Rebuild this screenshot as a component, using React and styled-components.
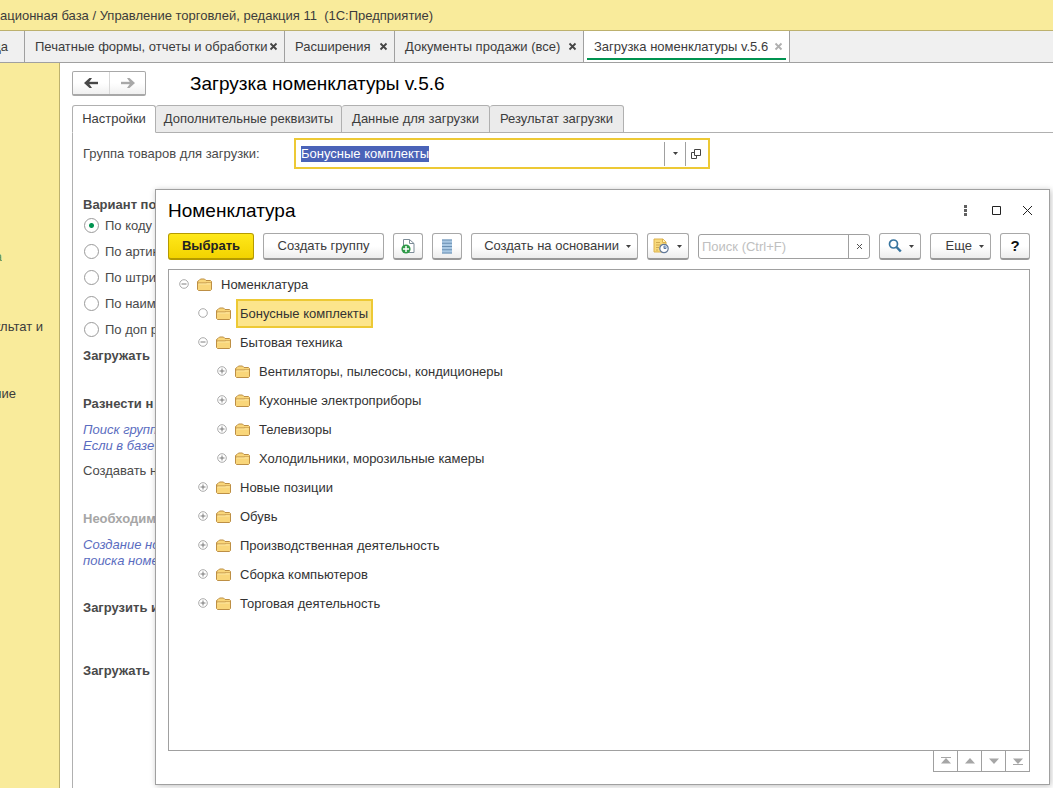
import React, { useEffect, useRef } from 'react'
import styled, { createGlobalStyle, css } from 'styled-components'

const GlobalStyle = createGlobalStyle`
  * { box-sizing: border-box; }
  body {
    margin: 0;
    background: #fff;
    color: #3c3c3c;
    font-family: "Liberation Sans", Arial, sans-serif;
    font-size: 13px;
    line-height: 16px;
  }
  button, input {
    font: inherit;
    color: inherit;
  }
  button { padding: 0; cursor: pointer; }
`
const Page = styled.div`
  display: flex;
  flex-direction: column;
  height: 100vh;
  overflow: hidden;
`
const TitleBar = styled.header`
  height: 31px;
  padding-top: 8px;
  background: #f9eb9b;
  border-bottom: 1px solid #bdb16e;
  white-space: pre;
`
const WindowTabs = styled.nav`
  display: flex;
  height: 32px;
  background: #f0f0f0;
  border-bottom: 1px solid #a0a0a0;
`
const WindowTab = styled.div`
  flex: none;
  display: flex;
  align-items: center;
  justify-content: space-between;
  width: ${props => props.$width}px;
  padding: 0 6px 0 10px;
  border-right: 1px solid #a0a0a0;
  white-space: nowrap;
  ${props => props.$cut && css`
    padding: 0 16px 0 0;
    justify-content: flex-end;
    overflow: hidden;
  `}
  ${props => props.$active && css`
    background: linear-gradient(#009350, #009350) center bottom 2px / calc(100% - 6px) 2px no-repeat #fff;
  `}
`
const TabLink = styled.a`
  color: #3c3c3c;
  text-decoration: none;
`
const CloseTab = styled.button`
  display: flex;
  border: none;
  background: none;
  color: ${props => props.$pale ? '#b0b0b0' : '#444'};
`
const Body = styled.div`
  display: flex;
  flex: 1;
  min-height: 0;
`
const Sidebar = styled.aside`
  flex: none;
  display: flex;
  flex-direction: column;
  width: 60px;
  padding-top: 186px;
  background: #f9eb9b;
  border-right: 1px solid #bdb16e;
`
const SideItem = styled.a`
  display: flex;
  justify-content: flex-end;
  overflow: hidden;
  width: ${props => props.$width}px;
  margin-bottom: ${props => props.$gap || 0}px;
  color: ${props => props.$green ? '#5f8f4c' : '#3c3c3c'};
  text-decoration: none;
  white-space: nowrap;
`
const Main = styled.main`
  flex: 1;
  display: flex;
  flex-direction: column;
  min-width: 0;
  padding: 8px 0 0 12px;
`
const Heading = styled.div`
  display: flex;
  align-items: center;
  gap: 44px;
`
const NavButtons = styled.div`
  display: flex;
  height: 25px;
  border: 1px solid #a8a8a8;
  border-bottom-width: 2px;
  border-radius: 2px;
  background: linear-gradient(#fff 50%, #f0f0f0);
`
const NavButton = styled.button`
  display: flex;
  align-items: center;
  justify-content: center;
  width: 36px;
  border: none;
  background: none;
  color: ${props => props.$pale ? '#a8a8a8' : '#484848'};
  & + & {
    border-left: 1px solid #d8d8d8;
  }
`
const Title = styled.h1`
  margin: 0;
  color: #000;
  font-size: 19px;
  font-weight: normal;
  line-height: 24px;
`
const FormTabs = styled.div`
  display: flex;
  margin-top: 9px;
  border-bottom: 1px solid #b0b0b0;
`
const FormTab = styled.button`
  flex: none;
  width: ${props => props.$width}px;
  height: 28px;
  margin-bottom: -1px;
  border: 1px solid #b0b0b0;
  border-left-width: ${props => props.$active ? 1 : 0}px;
  border-radius: 3px 3px 0 0;
  background: #ebebeb;
  white-space: nowrap;
  ${props => props.$active && css`
    background: #fff;
    border-bottom-color: #fff;
  `}
`
const Form = styled.form`
  flex: 1;
  display: flex;
  flex-direction: column;
  padding: 5px 0 0 10px;
  border-left: 1px solid #b0b0b0;
  color: #4a4a4a;
  white-space: nowrap;
`
const FieldRow = styled.div`
  display: flex;
  align-items: center;
  margin-bottom: 28px;
`
const Label = styled.label`
  width: 211px;
`
const ComboBox = styled.div`
  display: flex;
  align-items: center;
  width: 416px;
  height: 31px;
  padding: 0 2px 0 5px;
  border: 2px solid #edc935;
  background: #fff;
`
const ComboInput = styled.input`
  flex: 1;
  min-width: 0;
  height: 16px;
  padding: 0;
  border: none;
  outline: none;
  &::selection {
    background: #4a63b8;
    color: #fff;
  }
`
const ComboButton = styled.button`
  display: flex;
  align-items: center;
  justify-content: center;
  width: 21px;
  height: 24px;
  border: none;
  border-left: 1px solid #a0a0a0;
  background: none;
`
const Section = styled.h2`
  margin: 0 0 ${props => props.$gap || 0}px;
  color: ${props => props.$pale ? '#a6a6a6' : '#4a4a4a'};
  font-size: 13px;
  line-height: 16px;
`
const RadioGroup = styled.div`
  display: flex;
  flex-direction: column;
  margin-bottom: 5px;
`
const RadioRow = styled.label`
  display: flex;
  align-items: center;
  gap: 6px;
  height: 26px;
`
const Radio = styled.input`
  appearance: none;
  width: 15px;
  height: 15px;
  margin: 0 0 1px 1px;
  border: 1px solid #9a9a9a;
  border-radius: 50%;
  background: #fff;
  &:checked {
    background: radial-gradient(circle, #009350 2px, #fff 3px);
  }
`
const Hint = styled.p`
  margin: 0 0 ${props => props.$gap}px;
  color: #5a6cc0;
  font-style: italic;
`
const Note = styled.p`
  margin: 0 0 32px;
`

// modal window floating over the form
const Dialog = styled.section`
  position: absolute;
  top: 189px;
  right: 3px;
  bottom: 3px;
  left: 155px;
  display: flex;
  flex-direction: column;
  padding: 9px 19px 12px 12px;
  border: 1px solid #a0a0a0;
  background: #fff;
  box-shadow: 1px 1px 6px rgba(0, 0, 0, 0.25);
`
const DialogHeader = styled.div`
  display: flex;
  align-items: center;
  justify-content: space-between;
  margin-bottom: 10px;
`
const WindowButtons = styled.div`
  display: flex;
  gap: 15px;
  margin-right: -7px;
`
const WindowButton = styled.button`
  display: flex;
  border: none;
  background: none;
  color: #333;
`
const Toolbar = styled.div`
  display: flex;
  gap: 9px;
  margin-bottom: 9px;
`
const Button = styled.button`
  flex: none;
  display: flex;
  align-items: center;
  justify-content: center;
  gap: 7px;
  width: ${props => props.$width || 30}px;
  height: 27px;
  border: 1px solid #a8a8a8;
  border-bottom: 2px solid #989898;
  border-radius: 3px;
  background: linear-gradient(#fff 50%, #ededed);
  white-space: nowrap;
  ${props => props.$menu && css`
    justify-content: flex-end;
    padding-right: 6px;
  `}
  ${props => props.$primary && css`
    border-color: #b59a00;
    background: linear-gradient(#ffe81a, #f3d300);
    color: #222;
    font-weight: bold;
  `}
  ${props => props.$help && css`
    color: #111;
    font-size: 15px;
    font-weight: bold;
  `}
`
const Search = styled.div`
  flex: 1;
  display: flex;
  min-width: 0;
  height: 25px;
  margin-top: 1px;
  border: 1px solid #a0a0a0;
  border-radius: 3px;
`
const SearchInput = styled.input`
  flex: 1;
  min-width: 0;
  padding: 0 3px;
  border: none;
  outline: none;
  background: none;
  &::placeholder {
    color: #c0c0c0;
  }
`
const ClearButton = styled.button`
  display: flex;
  align-items: center;
  justify-content: center;
  width: 21px;
  border: none;
  border-left: 1px solid #a0a0a0;
  background: none;
`
const Tree = styled.ul`
  flex: 1;
  min-height: 0;
  margin: 0;
  padding: 0;
  overflow: hidden;
  border: 1px solid #a0a0a0;
  list-style: none;
`
const TreeRow = styled.li`
  display: flex;
  align-items: center;
  height: 29px;
  padding-left: ${props => 10 + props.$level * 19}px;
`
const Toggle = styled.button`
  display: flex;
  margin: 0 8px 2px 0;
  border: none;
  background: none;
`
const RowText = styled.span`
  margin-left: 5px;
  padding: 5px 3px 4px 2px;
  border: 2px solid transparent;
  color: #333;
  white-space: nowrap;
  ${props => props.$selected && css`
    border-color: #edc935;
    background: #fce58c;
  `}
`
const ScrollButtons = styled.div`
  display: flex;
  align-self: flex-end;
  border: 1px solid #a0a0a0;
  border-top: none;
`
const ScrollButton = styled.button`
  display: flex;
  align-items: center;
  justify-content: center;
  width: 24px;
  height: 20px;
  border: none;
  background: none;
  & + & {
    border-left: 1px solid #a0a0a0;
  }
  &:first-child {
    width: 23px;
  }
`

const Cross = () => (
  <svg width="9" height="9" viewBox="0 0 9 9">
    <path d="M1.5 1.5l6 6M7.5 1.5l-6 6" stroke="currentColor" strokeWidth="1.8" />
  </svg>
)

const Arrow = ({ flip }) => (
  <svg width="16" height="12" viewBox="0 0 16 12">
    <g transform={flip ? 'translate(16 0) scale(-1 1)' : undefined}>
      <path d="M15 6H3" stroke="currentColor" strokeWidth="2.4" />
      <path d="M1 6l5.500-5h2.500L5.500 6 9 11H6.500z" fill="currentColor" />
    </g>
  </svg>
)

const Caret = () => (
  <svg width="5" height="3" viewBox="0 0 5 3">
    <path d="M0 0h5L2.500 3z" fill="#404040" />
  </svg>
)

const OpenIcon = () => (
  <svg width="10" height="10" viewBox="0 0 10 10" fill="none" stroke="#444">
    <path d="M3.500.5h6v6h-6zM3.500 3.500h-3v6h5v-3" />
  </svg>
)

const Folder = () => (
  <svg width="15" height="13" viewBox="0 0 15 13">
    <path d="M.5 11.500V3.500L2 2.500 3.500 1h4L9 2.500h4.500l1 1v8l-1 1h-12z" fill="#f9d67a" stroke="#bd8f45" />
    <path d="M1 5h8.500l1-1" fill="none" stroke="#bd8f45" />
    <path d="M10 4.500h4" stroke="#d7ad5c" />
    <path d="M1.500 6h12" stroke="#fde6a0" />
  </svg>
)

const ToggleIcon = ({ type }) => (
  <svg width="10" height="10" viewBox="0 0 10 10" fill="none">
    <circle cx="5" cy="5" r="4.300" stroke="#a0a0a0" strokeWidth=".9" />
    {type !== 'leaf' && <path d="M2.500 5h5" stroke="#707070" strokeWidth=".9" />}
    {type === 'closed' && <path d="M5 2.500v5" stroke="#707070" strokeWidth=".9" />}
  </svg>
)

const NewDocument = () => (
  <svg width="14" height="16" viewBox="0 0 14 16">
    <path d="M2.500 10V1.500h6l4.500 4v9H8" fill="#fff" stroke="#7c8c98" />
    <path d="M8.500 1.500v4H13" fill="none" stroke="#7c8c98" />
    <circle cx="5" cy="11" r="4.600" fill="#2f9a48" />
    <path d="M5 8v6M2 11h6" stroke="#fff" strokeWidth="1.500" />
  </svg>
)

const ListIcon = () => (
  <svg width="12" height="15" viewBox="0 0 12 15">
    <path d="M1 .5h10v14H1z" fill="#a9c8e3" />
    <path d="M1 1h10M1 4.250h10M1 7.500h10M1 10.750h10M1 14h10" stroke="#6a8fb2" />
  </svg>
)

const HistoryIcon = () => (
  <svg width="17" height="16" viewBox="0 0 17 16">
    <path d="M1 1h9l3 3v10H1z" fill="#f8da7c" stroke="#dcb24e" />
    <path d="M9.500 1v3.500H13" fill="#fff2c0" stroke="#dcb24e" />
    <path d="M3 4.500h4M3 7h5M3 9.500h3M3 12h2" stroke="#d0aa50" />
    <circle cx="11" cy="10.500" r="4.200" fill="#fff" stroke="#62799a" strokeWidth="1.200" />
    <path d="M11 10.500V7.300a3.200 3.200 0 0 1 3 3.200z" fill="#9db9dc" />
    <path d="M11 7.800v2.700h2" fill="none" stroke="#62799a" />
  </svg>
)

const SearchIcon = () => (
  <svg width="14" height="14" viewBox="0 0 14 14" fill="none" stroke="#37749f">
    <circle cx="5.500" cy="5" r="4" strokeWidth="1.700" />
    <path d="M8.500 8l4.300 4.500" strokeWidth="2.500" />
  </svg>
)

const ScrollIcon = ({ down, edge }) => (
  <svg width="10" height="8" viewBox="0 0 10 8" fill="#a6a6a6">
    <g transform={down ? 'translate(0 8) scale(1 -1)' : undefined}>
      <path d="M5 1l5 5.500H0z" />
      {edge && <path d="M0 0h10v1H0z" />}
    </g>
  </svg>
)

const windowTabs = [
  { text: 'Печатные формы, отчеты и обработки', width: 260 },
  { text: 'Расширения', width: 110 },
  { text: 'Документы продажи (все)', width: 189 },
  { text: 'Загрузка номенклатуры v.5.6', width: 206, active: true },
]

const formTabs = [
  { text: 'Настройки', width: 84, active: true },
  { text: 'Дополнительные реквизиты', width: 186 },
  { text: 'Данные для загрузки', width: 148 },
  { text: 'Результат загрузки', width: 134 },
]

const searchModes = ['По коду', 'По артик', 'По штри', 'По наим', 'По доп р']

const groups = [
  { text: 'Номенклатура', level: 0, type: 'open' },
  { text: 'Бонусные комплекты', level: 1, type: 'leaf', selected: true },
  { text: 'Бытовая техника', level: 1, type: 'open' },
  { text: 'Вентиляторы, пылесосы, кондиционеры', level: 2, type: 'closed' },
  { text: 'Кухонные электроприборы', level: 2, type: 'closed' },
  { text: 'Телевизоры', level: 2, type: 'closed' },
  { text: 'Холодильники, морозильные камеры', level: 2, type: 'closed' },
  { text: 'Новые позиции', level: 1, type: 'closed' },
  { text: 'Обувь', level: 1, type: 'closed' },
  { text: 'Производственная деятельность', level: 1, type: 'closed' },
  { text: 'Сборка компьютеров', level: 1, type: 'closed' },
  { text: 'Торговая деятельность', level: 1, type: 'closed' },
]

const SettingsForm = () => {
  const groupInput = useRef(null)

  useEffect(() => {
    groupInput.current.focus()
    groupInput.current.select()
  }, [])

  return (
    <Form>
      <FieldRow>
        <Label htmlFor="group">Группа товаров для загрузки:</Label>
        <ComboBox>
          <ComboInput id="group" ref={groupInput} defaultValue="Бонусные комплекты" />
          <ComboButton type="button" aria-label="Выбрать из списка"><Caret /></ComboButton>
          <ComboButton type="button" aria-label="Открыть"><OpenIcon /></ComboButton>
        </ComboBox>
      </FieldRow>

      <Section>Вариант по</Section>
      <RadioGroup>
        {searchModes.map((mode, i) => (
          <RadioRow key={mode}>
            <Radio type="radio" name="mode" defaultChecked={i === 0} />
            {mode}
          </RadioRow>
        ))}
      </RadioGroup>
      <Section $gap={32}>Загружать</Section>
      <Section $gap={10}>Разнести н</Section>
      <Hint $gap={9}>Поиск групп<br />Если в базе</Hint>
      <Note>Создавать н</Note>
      <Section $pale $gap={10}>Необходим</Section>
      <Hint $gap={31}>Создание но<br />поиска номе</Hint>
      <Section $gap={47}>Загрузить и</Section>
      <Section>Загружать</Section>
    </Form>
  )
}

const PickerDialog = () => {
  return (
    <Dialog role="dialog" aria-label="Номенклатура">
      <DialogHeader>
        <Title as="h2">Номенклатура</Title>
        <WindowButtons>
          <WindowButton aria-label="Меню">
            <svg width="16" height="16" viewBox="0 0 16 16" fill="#606060">
              <path d="M5 2h3v3H5zM5 6h3v3H5zM5 10h3v3H5z" />
            </svg>
          </WindowButton>
          <WindowButton aria-label="Развернуть">
            <svg width="16" height="16" viewBox="0 0 16 16" fill="none" stroke="#222">
              <path d="M2.500 3.500h8v8h-8z" />
            </svg>
          </WindowButton>
          <WindowButton aria-label="Закрыть">
            <svg width="16" height="16" viewBox="0 0 16 16" stroke="#222">
              <path d="M2 3l9 9M11 3l-9 9" />
            </svg>
          </WindowButton>
        </WindowButtons>
      </DialogHeader>

      <Toolbar>
        <Button $primary $width={86}>Выбрать</Button>
        <Button $width={121}>Создать группу</Button>
        <Button aria-label="Создать"><NewDocument /></Button>
        <Button aria-label="Список"><ListIcon /></Button>
        <Button $menu $width={167}>Создать на основании <Caret /></Button>
        <Button $menu $width={42} aria-label="История"><HistoryIcon /><Caret /></Button>
        <Search>
          <SearchInput placeholder="Поиск (Ctrl+F)" aria-label="Поиск" />
          <ClearButton aria-label="Очистить">
            <svg width="7" height="7" viewBox="0 0 7 7" stroke="#505050">
              <path d="M1 1l5 5M6 1L1 6" />
            </svg>
          </ClearButton>
        </Search>
        <Button $menu $width={42} aria-label="Найти"><SearchIcon /><Caret /></Button>
        <Button $menu $width={61}>Еще <Caret /></Button>
        <Button $help>?</Button>
      </Toolbar>

      <Tree>
        {groups.map(group => (
          <TreeRow key={group.text} $level={group.level}>
            <Toggle aria-label="Развернуть группу"><ToggleIcon type={group.type} /></Toggle>
            <Folder />
            <RowText $selected={group.selected}>{group.text}</RowText>
          </TreeRow>
        ))}
      </Tree>
      <ScrollButtons>
        <ScrollButton aria-label="В начало"><ScrollIcon edge /></ScrollButton>
        <ScrollButton aria-label="Вверх"><ScrollIcon /></ScrollButton>
        <ScrollButton aria-label="Вниз"><ScrollIcon down /></ScrollButton>
        <ScrollButton aria-label="В конец"><ScrollIcon down edge /></ScrollButton>
      </ScrollButtons>
    </Dialog>
  )
}

const App = () => {
  return (
    <Page>
      <GlobalStyle />
      <TitleBar>ационная база / Управление торговлей, редакция 11  (1С:Предприятие)</TitleBar>
      <WindowTabs>
        <WindowTab $cut $width={25}><TabLink href="#">да</TabLink></WindowTab>
        {windowTabs.map(tab => (
          <WindowTab key={tab.text} $width={tab.width} $active={tab.active}>
            <TabLink href="#">{tab.text}</TabLink>
            <CloseTab $pale={tab.active} aria-label="Закрыть вкладку"><Cross /></CloseTab>
          </WindowTab>
        ))}
      </WindowTabs>
      <Body>
        <Sidebar>
          <SideItem href="#" $width={2} $gap={54} $green>а</SideItem>
          <SideItem href="#" $width={43} $gap={51}>ультат и</SideItem>
          <SideItem href="#" $width={16}>ние</SideItem>
        </Sidebar>
        <Main>
          <Heading>
            <NavButtons>
              <NavButton aria-label="Назад"><Arrow /></NavButton>
              <NavButton $pale aria-label="Вперед"><Arrow flip /></NavButton>
            </NavButtons>
            <Title>Загрузка номенклатуры v.5.6</Title>
          </Heading>
          <FormTabs>
            {formTabs.map(tab => (
              <FormTab key={tab.text} $width={tab.width} $active={tab.active}>{tab.text}</FormTab>
            ))}
          </FormTabs>
          <SettingsForm />
        </Main>
      </Body>
      <PickerDialog />
    </Page>
  )
}

export default App
